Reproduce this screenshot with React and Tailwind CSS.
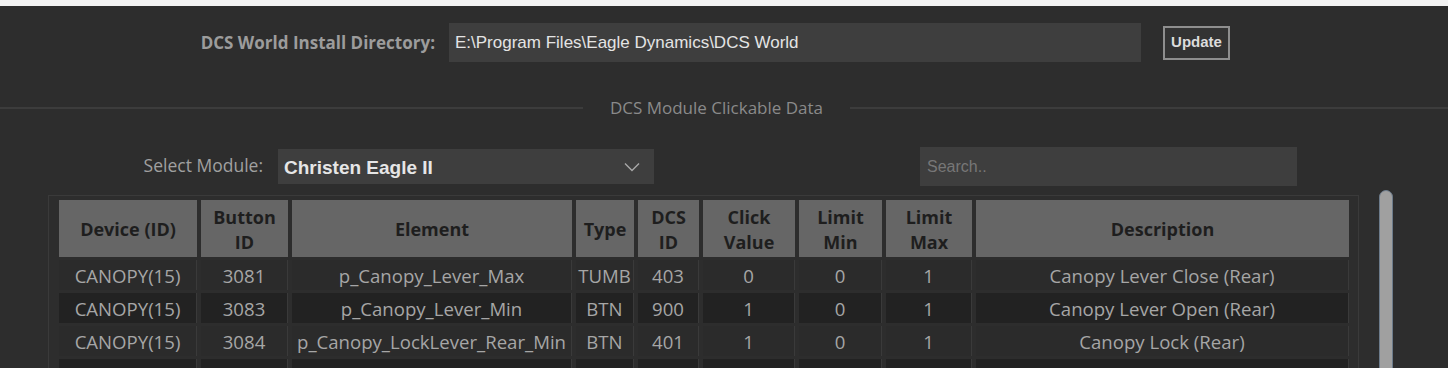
import React from "react";

const cols = [
  { label: ["Device (ID)"], w: "w-[138px]" },
  { label: ["Button", "ID"], w: "w-[87px]" },
  { label: ["Element"], w: "w-[280px]" },
  { label: ["Type"], w: "w-[58px]" },
  { label: ["DCS", "ID"], w: "w-[61px]" },
  { label: ["Click", "Value"], w: "w-[92px]" },
  { label: ["Limit", "Min"], w: "w-[83px]" },
  { label: ["Limit", "Max"], w: "w-[86px]" },
  { label: ["Description"], w: "w-[373px]" },
];

const rows = [
  ["CANOPY(15)", "3081", "p_Canopy_Lever_Max", "TUMB", "403", "0", "0", "1", "Canopy Lever Close (Rear)"],
  ["CANOPY(15)", "3083", "p_Canopy_Lever_Min", "BTN", "900", "1", "0", "1", "Canopy Lever Open (Rear)"],
  ["CANOPY(15)", "3084", "p_Canopy_LockLever_Rear_Min", "BTN", "401", "1", "0", "1", "Canopy Lock (Rear)"],
  ["CANOPY(15)", "3085", "p_Canopy_LockLever_Rear_Max", "BTN", "401", "0", "0", "1", "Canopy Unlock (Rear)"],
];

export default function App() {
  return (
    <div className="w-[1448px] h-[368px] overflow-hidden bg-[#2d2d2d] font-['Open_Sans',sans-serif]">
      <div className="h-[6px] bg-[#f3f3f3]" />

      {/* Install directory row */}
      <div className="mt-[17px] flex h-[39px] items-center">
        <div className="w-[435px] whitespace-nowrap text-right text-[17px] font-bold text-[#9c9c9c]">
          DCS World Install Directory:
        </div>
        <div className="ml-[14px] flex h-[39px] w-[692px] items-center bg-[#3e3e3e] pl-[6px] font-['Liberation_Sans',Arial,sans-serif] text-[17px] text-[#e4e4e4]">
          E:\Program Files\Eagle Dynamics\DCS World
        </div>
        <button className="ml-[22px] flex h-[34px] w-[67px] items-center justify-center border-2 border-[#8e8e8e] bg-[#333333] font-['Liberation_Sans',Arial,sans-serif] text-[15px] font-bold text-[#dcdcdc]">
          Update
        </button>
      </div>

      {/* Fieldset legend line */}
      <div className="mt-[36px] flex h-[20px] items-center">
        <div className="h-[2px] w-[583px] bg-[#3c3c3c]" />
        <div className="w-[267px] whitespace-nowrap text-center text-[17px] leading-[20px] text-[#8a8a8a]">
          DCS Module Clickable Data
        </div>
        <div className="h-[2px] flex-1 bg-[#3c3c3c]" />
      </div>

      {/* Select row */}
      <div className="mt-[29px] flex h-[39px] items-center">
        <div className="ml-[130px] w-[133px] whitespace-nowrap pb-[2px] text-right text-[17.5px] text-[#a0a0a0]">
          Select Module:
        </div>
        <div className="ml-[15px] flex h-[35px] w-[376px] items-center justify-between bg-[#3e3e3e] pl-[6px] pr-[14px]">
          <span className="pt-[3px] font-['Liberation_Sans',Arial,sans-serif] text-[19px] font-bold text-[#e6e6e6]">
            Christen Eagle II
          </span>
          <svg width="16" height="10" viewBox="0 0 16 10" fill="none">
            <path d="M1 1.5 L8 8.5 L15 1.5" stroke="#a8a8a8" strokeWidth="1.4" />
          </svg>
        </div>
        <div className="ml-[266px] flex h-[39px] w-[377px] items-center bg-[#3e3e3e] pl-[7px] font-['Liberation_Sans',Arial,sans-serif] text-[16px] text-[#777777]">
          Search..
        </div>
      </div>

      {/* Table row */}
      <div className="mt-[4px] flex items-start">
        <div className="ml-[48px] mt-[5px] h-[200px] w-[1311px] border border-[#3a3a3a] pl-[6px] pt-[1px]">
          <table className="table-fixed border-separate border-spacing-x-[4px] border-spacing-y-[3px]">
            <thead>
              <tr>
                {cols.map((c, i) => (
                  <th
                    key={i}
                    className={`${c.w} h-[57px] whitespace-nowrap bg-[#666666] p-0 pt-[2px] text-center align-middle text-[18px] font-bold leading-[25px] text-[#1e1e1e]`}
                  >
                    {c.label.map((l, j) => (
                      <div key={j}>{l}</div>
                    ))}
                  </th>
                ))}
              </tr>
            </thead>
            <tbody>
              {rows.map((r, ri) => (
                <tr key={ri}>
                  {r.map((v, ci) => (
                    <td
                      key={ci}
                      className={`h-[30px] whitespace-nowrap border-r border-[#3a3a3a] p-0 pt-[2px] text-center align-middle text-[18.6px] leading-[28px] text-[#a6a6a6] ${
                        ri % 2 === 1 ? "bg-[#222222]" : "bg-[#2b2b2b]"
                      }`}
                    >
                      {v}
                    </td>
                  ))}
                </tr>
              ))}
            </tbody>
          </table>
        </div>
        <div className="ml-[20px] h-[200px] w-[14px] rounded-t-full border border-[#6c7b8b] bg-[#a0a0a0]" />
      </div>
    </div>
  );
}
